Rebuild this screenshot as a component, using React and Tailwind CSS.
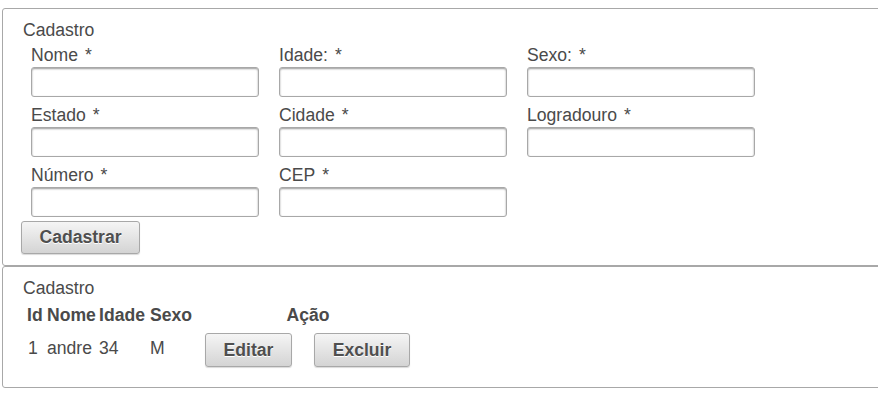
const fields = [
  ['Nome', 'Idade:', 'Sexo:'],
  ['Estado', 'Cidade', 'Logradouro'],
  ['Número', 'CEP'],
];

const rows = [{ id: 1, nome: 'andre', idade: 34, sexo: 'M' }];

function Field({ label }) {
  return (
    <div className="w-[248px] flex flex-col">
      <label className="h-[20px] leading-[20px] mb-[2px]">
        {label}
        <span className="ml-[7px]">*</span>
      </label>
      <input
        type="text"
        className="w-[228px] h-[30px] rounded-[3px] border border-[#a8a8a8] bg-white shadow-[inset_0_1px_2px_rgba(0,0,0,0.4)] outline-none"
      />
    </div>
  );
}

function Btn({ children, w, h = 'h-[34px]' }) {
  return (
    <button
      type="button"
      className={`${w} ${h} rounded-[3px] border border-[#a8a8a8] bg-gradient-to-b from-[#f5f5f5] to-[#d4d4d4] font-bold text-[#4f4f4f] [text-shadow:0_1px_0_#fff] shadow-[0_1px_1px_rgba(0,0,0,0.15)]`}
    >
      {children}
    </button>
  );
}

export default function App() {
  return (
    <div className="w-full overflow-hidden bg-white font-['Liberation_Sans',Arial,sans-serif] text-[17.6px] text-[#4a4a4a]">
      <div className="w-[920px] pl-[2px] pt-[8px]">
        {/* Form panel */}
        <div className="border border-[#a8a8a8] rounded-l-[3px] pt-[11px] pb-[11px] pl-[18px]">
          <div className="h-[20px] leading-[20px] pl-[2px]">Cadastro</div>
          <div className="pl-[10px] mt-[5px]">
            {fields.map((row, i) => (
              <div key={i} className="flex mb-[8px]">
                {row.map(f => <Field key={f} label={f} />)}
              </div>
            ))}
          </div>
          <div className="-mt-[4px]">
            <Btn w="w-[119px]" h="h-[33px]">Cadastrar</Btn>
          </div>
        </div>

        {/* Listing panel */}
        <div className="border border-[#a8a8a8] rounded-l-[3px] pt-[11px] pb-[20px] pl-[20px]">
          <div className="h-[20px] leading-[20px]">Cadastro</div>
          <div className="mt-[7px] pl-[4px]">
            <div className="flex h-[20px] leading-[20px] font-bold">
              <span className="w-[20px]">Id</span>
              <span className="w-[52px]">Nome</span>
              <span className="w-[51px]">Idade</span>
              <span className="w-[55px]">Sexo</span>
              <span className="w-[206px] text-center">Ação</span>
            </div>
            {rows.map(r => (
              <div key={r.id} className="flex items-center mt-[8px] h-[34px]">
                <span className="w-[20px] pl-[1px] -mt-[3px]">{r.id}</span>
                <span className="w-[52px] -mt-[3px]">{r.nome}</span>
                <span className="w-[51px] -mt-[3px]">{r.idade}</span>
                <span className="w-[55px] -mt-[3px]">{r.sexo}</span>
                <div className="flex gap-[22px]">
                  <Btn w="w-[87px]">Editar</Btn>
                  <Btn w="w-[96px]">Excluir</Btn>
                </div>
              </div>
            ))}
          </div>
        </div>
      </div>
    </div>
  );
}
